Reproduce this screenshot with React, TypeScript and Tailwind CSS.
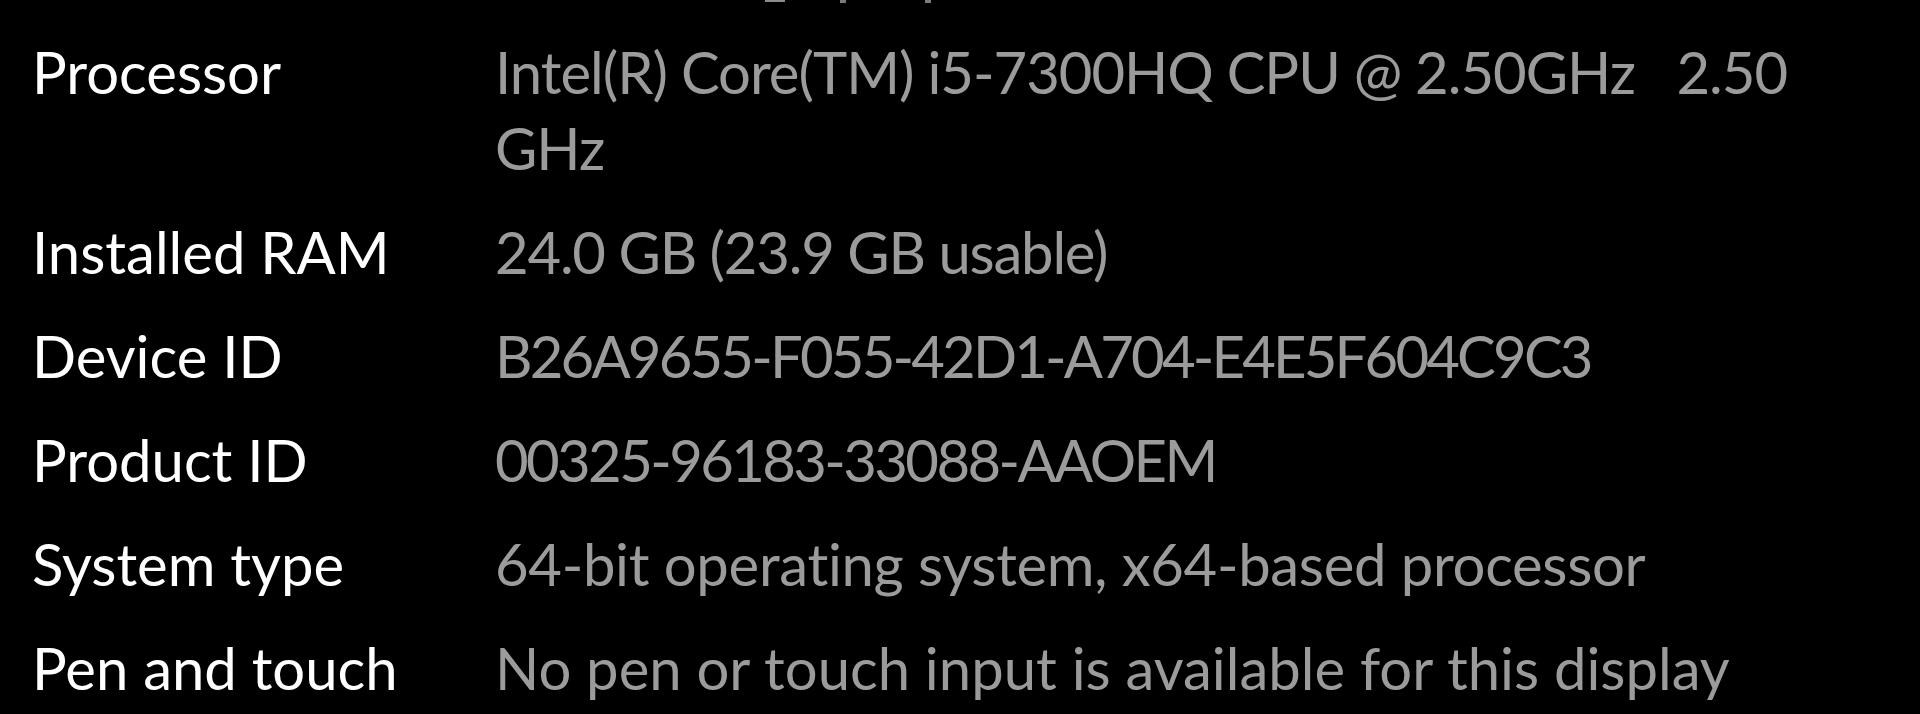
import React from 'react';

interface SpecRow {
  label: string;
  value: string;
  tracking: string;
}

// tracking per row keeps the ID strings at the width of the original font
const specs: SpecRow[] = [
  { label: 'Processor', value: 'Intel(R) Core(TM) i5-7300HQ CPU @ 2.50GHz   2.50 GHz', tracking: 'tracking-[-1px]' },
  { label: 'Installed RAM', value: '24.0 GB (23.9 GB usable)', tracking: 'tracking-[-1.2px]' },
  { label: 'Device ID', value: 'B26A9655-F055-42D1-A704-E4E5F604C9C3', tracking: 'tracking-[-2.8px]' },
  { label: 'Product ID', value: '00325-96183-33088-AAOEM', tracking: 'tracking-[-2.6px]' },
  { label: 'System type', value: '64-bit operating system, x64-based processor', tracking: 'tracking-[-0.3px]' },
  { label: 'Pen and touch', value: 'No pen or touch input is available for this display', tracking: 'tracking-normal' },
];

export default function App() {
  return (
    <div className="w-[1920px] h-[714px] bg-black overflow-hidden font-['Lato','Segoe_UI',sans-serif] [font-variant-ligatures:none]">
      {/* bottoms of the row above, cut off by the crop */}
      <div className="flex h-[3px] pl-[765px]">
        <span className="w-[20px] h-[2px] bg-[#8c8c8c]" />
        <span className="w-[6px] h-[3px] bg-[#7a7a7a] ml-[55px]" />
        <span className="w-[6px] h-[3px] bg-[#7a7a7a] ml-[79px]" />
      </div>

      <div className="flex flex-col gap-[28px] pt-[31px] pl-[32px]">
        {specs.map((row) => (
          <div key={row.label} className="flex text-[58px] leading-[76px]">
            <div className="w-[463px] shrink-0 text-white">{row.label}</div>
            <div className={`w-[1360px] text-[#9b9b9b] whitespace-pre-wrap ${row.tracking}`}>{row.value}</div>
          </div>
        ))}
      </div>
    </div>
  );
}
